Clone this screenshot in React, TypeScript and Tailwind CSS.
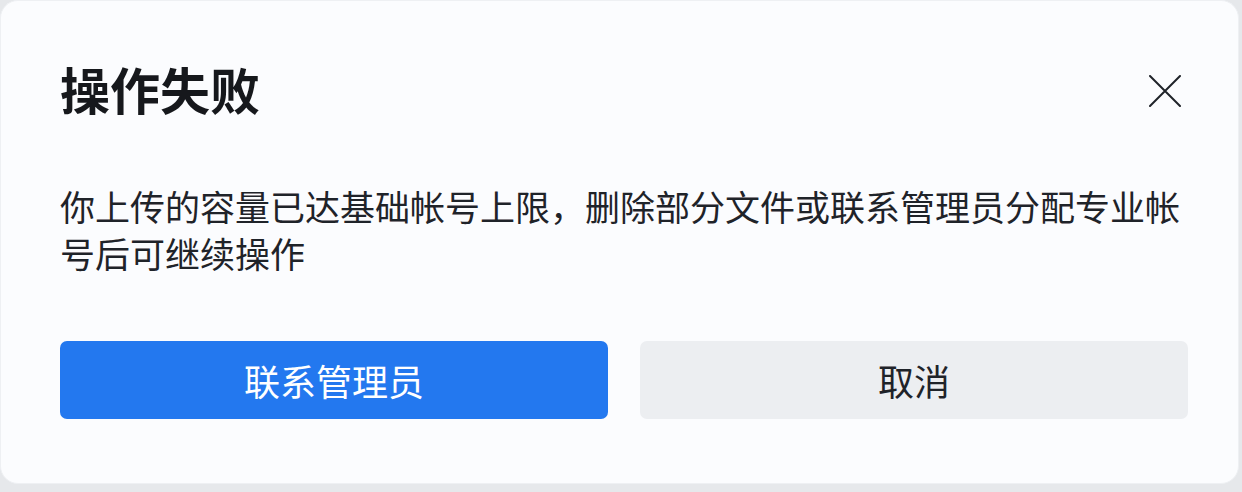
const cjk = {
  fontFamily: '"Noto Sans CJK SC", "Noto Sans", sans-serif',
};

export default function App() {
  return (
    <div className="w-[1242px] h-[492px] bg-[#e6e8eb]" style={cjk}>
      {/* Dialog card */}
      <div className="w-[1239px] h-[484px] bg-[#fbfcfe] rounded-[18px] border border-[#eef0f3] pl-[59px] pr-[50px] pt-[61px] flex flex-col">
        {/* Header */}
        <div className="flex items-start justify-between">
          <h1 className="text-[50px] leading-[52px] font-bold text-[#16181c]">
            操作失败
          </h1>
          <button className="mt-[13px] mr-[7px] text-[#1f2329]" aria-label="关闭">
            <svg width="32" height="32" viewBox="0 0 32 32" fill="none">
              <path
                d="M1 1L31 31M31 1L1 31"
                stroke="currentColor"
                strokeWidth="2"
                strokeLinecap="round"
              />
            </svg>
          </button>
        </div>

        {/* Message */}
        <p className="mt-[68px] text-[35px] leading-[47px] text-[#1f2329] pr-[4px]">
          你上传的容量已达基础帐号上限，删除部分文件或联系管理员分配专业帐号后可继续操作
        </p>

        {/* Actions */}
        <div className="mt-[65px] flex gap-[32px]">
          <button className="flex-1 h-[78px] rounded-[7px] bg-[#2378ef] text-white text-[36px] leading-none">
            联系管理员
          </button>
          <button className="flex-1 h-[78px] rounded-[7px] bg-[#eceef1] text-[#1f2329] text-[36px] leading-none">
            取消
          </button>
        </div>
      </div>
    </div>
  );
}
